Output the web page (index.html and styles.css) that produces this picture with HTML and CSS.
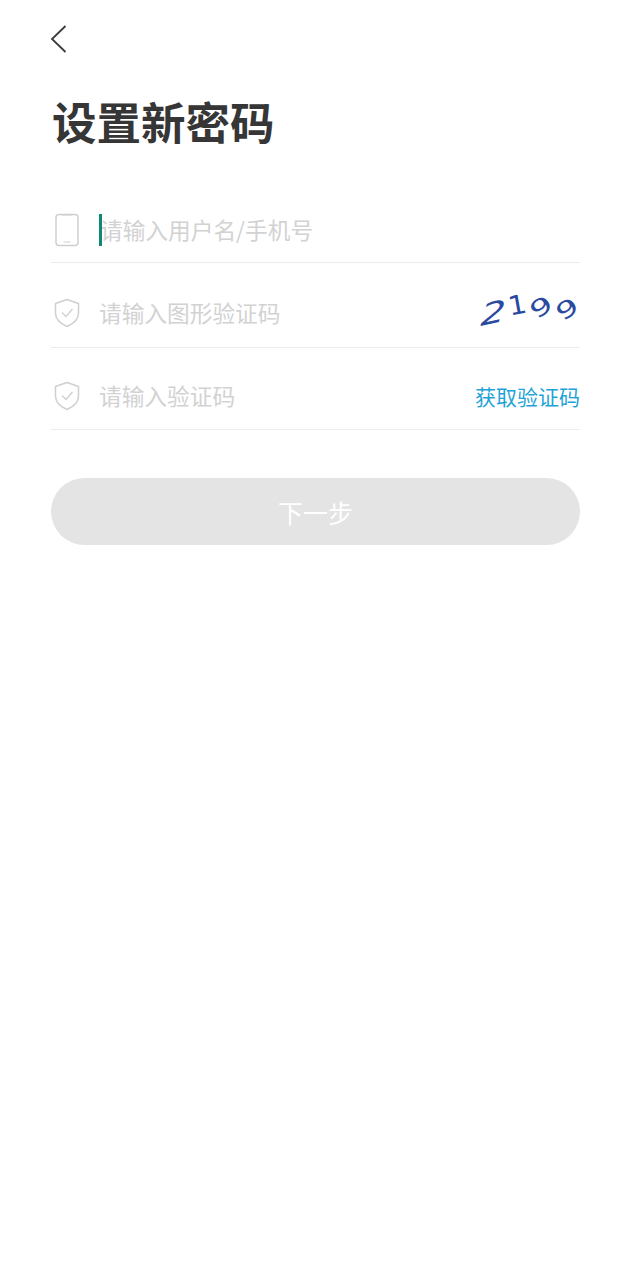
FILE: index.html
```html
<!DOCTYPE html>
<html lang="zh">
<head>
<meta charset="utf-8">
<title>设置新密码</title>
<link rel="stylesheet" href="styles.css">
</head>
<body>
<main class="page">
  <div class="back">
    <svg width="18" height="30" viewBox="0 0 18 30"><path d="M15.500 2 2 15 15.500 28" fill="none" stroke="#3a3a3a" stroke-width="1.800"/></svg>
  </div>
  <h1 class="title">设置新密码</h1>
  <form class="form">
    <div class="row row-first">
      <span class="ico">
        <svg width="26" height="34" viewBox="0 0 26 34"><rect x="2" y="1.500" width="22" height="31" rx="3" fill="none" stroke="#cfcfcf" stroke-width="1.500"/><path d="M7.500 2h11M9.500 29h7" stroke="#cfcfcf" stroke-width="1.200"/></svg>
      </span>
      <span class="field"><i class="caret"></i><span class="ph ph-over">请输入用户名/手机号</span></span>
    </div>
    <div class="row row-second">
      <span class="ico">
        <svg width="28" height="30" viewBox="0 0 28 30"><path d="M14 1.500 25.500 5.500V15C25.500 22 20 26 14 28.500 8 26 2.500 22 2.500 15V5.500Z" fill="none" stroke="#cfcfcf" stroke-width="1.500" stroke-linejoin="round"/><path d="M9 14.500 13 18.500 19.500 11" fill="none" stroke="#cfcfcf" stroke-width="1.300"/></svg>
      </span>
      <span class="field"><span class="ph">请输入图形验证码</span></span>
      <span class="captcha"><span class="c1">2</span><span class="c2">1</span><span class="c3">9</span><span class="c4">9</span></span>
    </div>
    <div class="row row-third">
      <span class="ico">
        <svg width="28" height="30" viewBox="0 0 28 30"><path d="M14 1.500 25.500 5.500V15C25.500 22 20 26 14 28.500 8 26 2.500 22 2.500 15V5.500Z" fill="none" stroke="#cfcfcf" stroke-width="1.500" stroke-linejoin="round"/><path d="M9 14.500 13 18.500 19.500 11" fill="none" stroke="#cfcfcf" stroke-width="1.300"/></svg>
      </span>
      <span class="field"><span class="ph">请输入验证码</span></span>
      <span class="get-code">获取验证码</span>
    </div>
  </form>
  <div class="submit">下一步</div>
</main>
</body>
</html>
```
FILE: styles.css
```css
* { box-sizing: border-box; }
html, body { margin: 0; background: #fff; }
body { font-family: "Noto Sans CJK SC", "Noto Sans", sans-serif; }
.page { width: 630px; height: 1280px; padding: 24px 50px 0 51px; }
.back { height: 30px; margin-left: -1px; display: flex; align-items: flex-start; }
.title { margin: 37px 0 0 1px; height: 60px; font-size: 44.500px; line-height: 60px; font-weight: 700; color: #363636; }
.form { margin-top: 45px; }
.row { display: flex; align-items: center; border-bottom: 1px solid #ececec; }
.row-first { height: 67px; padding-top: 2px; }
.row-second { height: 85px; padding-top: 16px; }
.row-third { height: 82px; padding-top: 14px; }
.ico { width: 48px; flex: none; display: flex; justify-content: flex-start; padding-left: 2px; }
.field { flex: 1; display: flex; align-items: center; position: relative; }
.ph { font-size: 22.700px; line-height: 32px; color: #d2d2d2; white-space: nowrap; }
.caret { position: absolute; left: 0; top: 0; width: 3px; height: 32px; background: #0f8a72; }
.ph-over { margin-left: 1px; }
.row-first .ico { padding-left: 3px; }
.captcha { flex: none; width: 110px; display: flex; justify-content: flex-end; padding-right: 4px; font-family: "DejaVu Sans", sans-serif; color: #2a4aa0; font-size: 29px; line-height: 32px; }
.captcha span { display: block; }
.c1 { transform: translate(-6px, 0) rotate(-12deg) skewX(-28deg) scaleX(1.400); }
.c2 { transform: translate(-1px, -8px) rotate(-10deg) scale(1, 0.900); }
.c3 { transform: translate(0, -6px) rotate(-35deg) scale(1.200, 0.800); margin-left: 5px; }
.c4 { transform: translateY(-4px) rotate(-35deg) scale(1.200, 0.800); margin-left: 7px; }
.get-code { font-size: 21px; line-height: 30px; color: #1fa3d6; white-space: nowrap; }
.submit { margin-top: 48px; height: 67px; border-radius: 34px; background: #e4e4e4; color: #fff; font-size: 25px; display: flex; align-items: center; justify-content: center; }
```
